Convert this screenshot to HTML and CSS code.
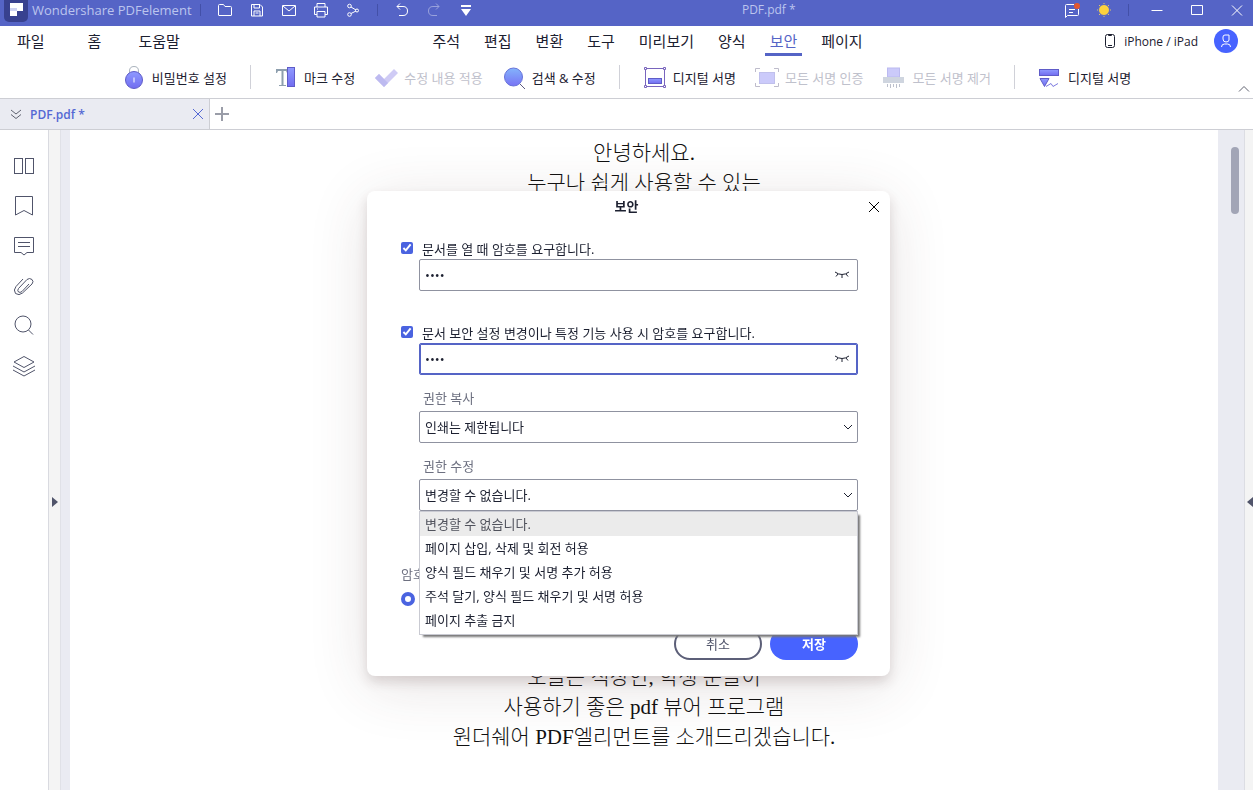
FILE: index.html
```html
<!DOCTYPE html>
<html lang="ko">
  <head>
    <meta charset="UTF-8" />
    <meta name="viewport" content="width=device-width, initial-scale=1.0" />
    <title>PDF.pdf * - Wondershare PDFelement</title>
    <link rel="stylesheet" href="styles.css">
  </head>
  <body>
    <!-- Title bar -->
    <header class="titlebar">
      <div class="titlebar-left">
        <div class="brand">
          <svg class="logo" viewBox="0 0 24 24"><rect y="-3" width="24" height="27" rx="5" fill="#38418f"/><path fill="#fff" d="M6 5h13v8h-6v5H6z"/><path fill="#cfd3f2" d="M6 10h7v3H6z"/></svg>
          <span>Wondershare PDFelement</span>
        </div>
        <span class="bar-sep"></span>
        <button class="icon-button" aria-label="열기"><svg viewBox="0 0 16 16"><path d="M1.5 13V3.500q0-1 1-1h4l1.500 2h5.500q1 0 1 1V13q0 .5-.5.5H2q-.5 0-.5-.5z"/></svg></button>
        <button class="icon-button" aria-label="저장"><svg viewBox="0 0 16 16"><path d="M2.500 2.500h8.500l2.500 2.500v9h-11zM5 2.500v3.500h5.500V3M5 14V9h6v5M6.500 11h3"/></svg></button>
        <button class="icon-button" aria-label="메일"><svg viewBox="0 0 16 16"><path d="M1.500 3.500h13v10h-13zM2 4l6 5 6-5"/></svg></button>
        <button class="icon-button" aria-label="인쇄"><svg viewBox="0 0 16 16"><path d="M4 5V1.500h8V5M4 12.500H1.500V5h13v7.500H12M4 9.500h8v5.500H4zM4 7h1"/></svg></button>
        <button class="icon-button" aria-label="공유"><svg viewBox="0 0 16 16"><circle cx="4.500" cy="4" r="1.800"/><circle cx="4.500" cy="12.500" r="1.800"/><circle cx="12" cy="8.500" r="1.500"/><path d="M6 5l5 3M6 11.500l5-2.500"/></svg></button>
        <span class="bar-sep"></span>
        <button class="icon-button" aria-label="실행 취소"><svg viewBox="0 0 16 16"><path d="M6 1.500L3 4.500l3 3M3 4.500h6q4.500 0 4.500 4.500T9 13.500H5"/></svg></button>
        <button class="icon-button faded" aria-label="다시 실행"><svg viewBox="0 0 16 16"><path d="M10 1.500l3 3-3 3M13 4.500H7Q2.500 4.500 2.500 9T7 13.500h4"/></svg></button>
        <button class="icon-button" aria-label="더 보기"><svg viewBox="0 0 16 16"><path class="solid" d="M3 3h10v2H3zM3 7h10l-5 7z"/></svg></button>
      </div>
      <div class="window-title">PDF.pdf *</div>
      <div class="titlebar-right">
        <button class="icon-button" aria-label="알림"><svg viewBox="0 0 16 16"><path d="M10 2.500H2.500q-1 0-1 1v12l2-2h10q1 0 1-1V7M5 7.500h6M5 10.500h4"/><circle class="dot" cx="13" cy="4" r="3"/></svg></button>
        <button class="icon-button" aria-label="테마"><svg viewBox="0 0 16 16"><g class="rays"><path d="M8 1v14M1 8h14M3 3l10 10M13 3L3 13"/></g><circle class="sun" cx="8" cy="8" r="5.500"/></svg></button>
        <span class="bar-sep"></span>
        <div class="window-buttons">
          <button class="icon-button" aria-label="최소화"><svg viewBox="0 0 16 16"><path d="M2.500 8.500h11"/></svg></button>
          <button class="icon-button" aria-label="최대화"><svg viewBox="0 0 16 16"><path d="M2.500 3.500h11v9h-11z"/></svg></button>
          <button class="icon-button" aria-label="닫기"><svg viewBox="0 0 16 16"><path d="M3 3.500l10 10M13 3.500l-10 10"/></svg></button>
        </div>
      </div>
    </header>

    <!-- Menu -->
    <div class="menubar">
      <nav class="menu menu-left">
        <a href="#">파일</a>
        <a href="#">홈</a>
        <a href="#">도움말</a>
      </nav>
      <nav class="menu menu-tabs">
        <a href="#">주석</a>
        <a href="#">편집</a>
        <a href="#">변환</a>
        <a href="#">도구</a>
        <a href="#">미리보기</a>
        <a href="#">양식</a>
        <a href="#" class="active">보안</a>
        <a href="#">페이지</a>
      </nav>
      <div class="account">
        <a href="#" class="mobile-link">
          <svg viewBox="0 0 12 16"><rect x="1.500" y="1.500" width="9" height="13" rx="2"/><path d="M4.500 1.500v1h3v-1M4 12.500h4"/></svg>
          iPhone / iPad
        </a>
        <button class="avatar" aria-label="계정"><svg viewBox="0 0 24 24"><path d="M9 10V8q0-2 2-2h4v5q0 2-3 2t-3-3zM7.500 18q0-3 3-3h3q3 0 3 3"/></svg></button>
      </div>
    </div>

    <!-- Security tools -->
    <div class="toolbar">
      <div class="tools">
        <button class="tool"><svg viewBox="0 0 24 24"><path d="M7.500 8V6Q7.500 1.500 12 1.500T16.500 6v2" fill="none" stroke="#aab3bd"/><circle cx="12" cy="15" r="8.500" fill="url(#violet)" stroke="#5f5cc8"/><path d="M12 12.500v5" stroke="#fff"/></svg>비밀번호 설정</button>
        <span class="tool-sep"></span>
        <button class="tool"><svg viewBox="0 0 24 24"><path d="M2 4h12v4h-1l-1-2H9.500v14H12v1H5v-1h2.500V6H4L3 8H2z" fill="#8e9fae"/><rect x="13.500" y="2.500" width="7" height="19" fill="url(#violet)" stroke="#5f5cc8"/></svg>마크 수정</button>
        <button class="tool" disabled><svg viewBox="0 0 24 24"><path d="M1 13l4-4 5 5 10-10 4 4-14 14z" fill="#cfcbf5"/><path d="M1 13l4-4 9 9-4 4z" fill="#bdbaf0"/></svg>수정 내용 적용</button>
        <button class="tool"><svg viewBox="0 0 24 24"><path d="M18 19l5 5" stroke="#5b5a80"/><circle cx="11.500" cy="12" r="9" fill="url(#lens)" stroke="#6773d9"/></svg>검색 &amp; 수정</button>
        <span class="tool-sep"></span>
        <button class="tool"><svg viewBox="0 0 24 24"><path d="M2.500 3.500h19v18h-19z" fill="none" stroke="#7965bd"/><path d="M1.500 2.500h2v2h-2zM20.500 2.500h2v2h-2zM1.500 20.500h2v2h-2zM20.500 20.500h2v2h-2z" fill="#fff" stroke="#7965bd"/><rect x="5.500" y="13.500" width="13" height="5" fill="url(#violet)" stroke="#5f5cc8"/></svg>디지털 서명</button>
        <button class="tool" disabled><svg viewBox="0 0 24 24"><path d="M.5 7V3.500H5M19 3.500h4.500V7M.5 18v3.500H5M19 21.500h4.500V18" fill="none" stroke="#bebccb"/><rect x="4.500" y="7.500" width="15" height="11" fill="#cbcafa" stroke="#c0c0ec"/></svg>모든 서명 인증</button>
        <button class="tool" disabled><svg viewBox="0 0 24 24"><rect x="5.500" y="3" width="12" height="9" fill="#cbcafa" stroke="#bbbaf0"/><path d="M1 12h21v6H1z" fill="#cfd5df"/><path d="M5.500 19v3M8.500 19v4M11.500 19v3M14.500 19v4M17.500 19v3" stroke="#bcc0cc"/></svg>모든 서명 제거</button>
        <span class="tool-sep"></span>
        <button class="tool"><svg viewBox="0 0 24 24"><rect x="1.500" y="4.500" width="19" height="6" fill="url(#violet)" stroke="#5f5cc8"/><path d="M2 13.500h9l-4.500 8z" fill="url(#violet)" stroke="#5f5cc8"/><path d="M8 21.500l5-3 2 3 5-3" fill="none" stroke="#7e7be0"/></svg>디지털 서명</button>
      </div>
      <button class="collapse" aria-label="도구 모음 접기"><svg viewBox="0 0 12 8"><path d="M1 6.500l5-5 5 5"/></svg></button>
    </div>

    <!-- Document tabs -->
    <div class="tabs">
      <div class="tab">
        <svg viewBox="0 0 12 12"><path d="M1 2l5 4 5-4M1 6.500l5 4 5-4"/></svg>
        <span class="tab-name">PDF.pdf *</span>
        <button class="tab-close" aria-label="탭 닫기"><svg viewBox="0 0 12 12"><path d="M1 1l10 10M11 1L1 11"/></svg></button>
      </div>
      <button class="tab-add" aria-label="새 탭"><svg viewBox="0 0 14 14"><path d="M7 0v14M0 7h14"/></svg></button>
    </div>

    <main class="workspace">
      <aside class="sidebar">
        <button aria-label="축소판"><svg viewBox="0 0 24 24"><rect x="2.500" y="4.500" width="8" height="15"/><rect x="13.500" y="4.500" width="8" height="15"/></svg></button>
        <button aria-label="책갈피"><svg viewBox="0 0 24 24"><path d="M3.500 2.500h17v18.500L12 16.500 3.500 21z"/></svg></button>
        <button aria-label="주석 목록"><svg viewBox="0 0 24 24"><path d="M2.500 3.500h19v15H15l-3 2.500-3-2.500H2.500zM6 8.500h12M6 12.500h12"/></svg></button>
        <button aria-label="첨부 파일"><svg viewBox="0 0 24 24"><path d="M11 5L4 12.500q-3 3.500-.5 7 3.500 2.500 7-.5l9.500-9q2-2.500 0-4.500-2.500-2-5 0l-8.500 9q-1.500 2 0 3.500 1.500 1 3.500-.5L17 10"/></svg></button>
        <button aria-label="검색"><svg viewBox="0 0 24 24"><circle cx="11" cy="10" r="8"/><path d="M16.500 16l4.500 4.500"/></svg></button>
        <button aria-label="레이어"><svg viewBox="0 0 24 24"><path d="M12 2.500l10 5.500-10 5.500L2 8zM1 12l11 6 11-6M1 16l11 6 11-6"/></svg></button>
      </aside>
      <div class="splitter"><svg viewBox="0 0 6 10"><path d="M0 0l6 5-6 5z"/></svg></div>
      <div class="viewer">
        <article class="page">
          <p>안녕하세요.<br>누구나 쉽게 사용할 수 있는</p>
          <p>오늘은 직장인, 학생 분들이<br>사용하기 좋은 pdf 뷰어 프로그램<br>원더쉐어 PDF엘리먼트를 소개드리겠습니다.</p>
        </article>
        <div class="scrollbar"><div class="thumb"></div></div>
      </div>
      <div class="splitter splitter-right"><svg viewBox="0 0 6 10"><path d="M6 0L0 5l6 5z"/></svg></div>
    </main>

    <!-- Security dialog -->
    <div class="overlay">
      <form class="dialog" role="dialog" aria-labelledby="dialog-title">
        <div class="dialog-header">
          <h2 id="dialog-title">보안</h2>
          <button type="button" aria-label="대화 상자 닫기"><svg viewBox="0 0 12 12"><path d="M1 1l10 10M11 1L1 11"/></svg></button>
        </div>

        <div class="password-group">
          <label class="check"><input type="checkbox" checked>문서를 열 때 암호를 요구합니다.</label>
          <div class="field">
            <input type="password" value="1234" aria-label="문서 열기 암호">
            <button type="button" aria-label="암호 표시"><svg viewBox="0 0 14 8"><path d="M0 1q7 5 14 0M3 3L1 5.500M7 4v3M11 3l2 2.500"/></svg></button>
          </div>
        </div>

        <div class="password-group">
          <label class="check"><input type="checkbox" checked>문서 보안 설정 변경이나 특정 기능 사용 시 암호를 요구합니다.</label>
          <div class="field focused">
            <input type="password" value="1234" aria-label="권한 암호">
            <button type="button" aria-label="암호 표시"><svg viewBox="0 0 14 8"><path d="M0 1q7 5 14 0M3 3L1 5.500M7 4v3M11 3l2 2.500"/></svg></button>
          </div>
        </div>

        <div class="select-group">
          <label for="copy">권한 복사</label>
          <div class="field">
            <select id="copy"><option>인쇄는 제한됩니다</option></select>
            <svg class="arrow" viewBox="0 0 8 6"><path d="M0 1l4 4 4-4"/></svg>
          </div>
        </div>

        <div class="select-group">
          <label for="modify">권한 수정</label>
          <div class="field">
            <select id="modify"><option>변경할 수 없습니다.</option></select>
            <svg class="arrow" viewBox="0 0 8 6"><path d="M0 1l4 4 4-4"/></svg>
            <ul class="options" role="listbox">
              <li role="option" aria-selected="true" class="selected">변경할 수 없습니다.</li>
              <li role="option">페이지 삽입, 삭제 및 회전 허용</li>
              <li role="option">양식 필드 채우기 및 서명 추가 허용</li>
              <li role="option">주석 달기, 양식 필드 채우기 및 서명 허용</li>
              <li role="option">페이지 추출 금지</li>
            </ul>
          </div>
        </div>

        <div class="encryption">
          <label for="level">암호</label>
          <input type="radio" id="level" name="level" checked>
        </div>

        <div class="dialog-actions">
          <button type="button" class="cancel">취소</button>
          <button type="button" class="save">저장</button>
        </div>
      </form>
    </div>

    <!-- Shared gradients -->
    <svg class="defs" aria-hidden="true">
      <linearGradient id="violet" x1="0" y1="0" x2="0" y2="1"><stop offset="0" stop-color="#8f9aff"/><stop offset="1" stop-color="#716cf0"/></linearGradient>
      <linearGradient id="lens" x1="0" y1="0" x2="0" y2="1"><stop offset="0" stop-color="#83b4fb"/><stop offset="1" stop-color="#7873f5"/></linearGradient>
    </svg>
  </body>
</html>
```

FILE: styles.css
```css
* {
  box-sizing: border-box;
}

body {
  font-family: "Open Sans", "Noto Sans CJK KR", sans-serif;
  font-size: 13px;
  margin: 0;
  height: 100vh;
  display: flex;
  flex-direction: column;
  overflow: hidden;
  color: #1c2030;
  background: #fff;
}

button {
  font: inherit;
  color: inherit;
  background: none;
  border: none;
  padding: 0;
  cursor: pointer;
}

a {
  color: inherit;
  text-decoration: none;
}

svg {
  display: block;
  fill: none;
  stroke: currentColor;
}

.defs {
  position: absolute;
  width: 0;
  height: 0;
}

/* Title bar */
.titlebar {
  display: flex;
  justify-content: space-between;
  height: 26px;
  padding: 0 8px 0 4px;
  background: #5564c6;
  color: #fff;
}

.titlebar-left,
.titlebar-right {
  display: flex;
  align-items: center;
  gap: 16px;
  height: 20px;
}

.brand {
  display: flex;
  align-items: center;
  gap: 4px;
  color: #bcc4ee;
}

.logo {
  width: 24px;
  height: 24px;
  stroke: none;
}

.bar-sep {
  width: 1px;
  height: 12px;
  background: #4350a8;
}

.brand + .bar-sep {
  margin-left: -8px;
}

.icon-button svg {
  width: 16px;
  height: 16px;
}

.icon-button.faded {
  opacity: 0.4;
}

.icon-button .solid {
  fill: #fff;
  stroke: none;
}

.icon-button .dot {
  fill: #e4572e;
  stroke: none;
}

.icon-button .rays {
  stroke: #e0c36a;
}

.icon-button .sun {
  fill: #fdd23e;
  stroke: #5564c6;
}

.window-title {
  line-height: 20px;
  color: #bcc4ee;
  font-size: 12px;
}

.window-buttons {
  display: flex;
  gap: 24px;
  margin-left: 4px;
}

/* Menu */
.menubar {
  display: flex;
  align-items: center;
  height: 30px;
  padding: 0 15px 0 17px;
}

.menu {
  display: flex;
  font-size: 15px;
  line-height: 30px;
}

.menu-left {
  flex: 1;
  gap: 43px;
}

.menu-left a:last-child {
  margin-left: -6px;
}

.menu-tabs {
  gap: 14px;
  margin-left: 40px;
}

.menu-tabs a {
  padding: 0 5px;
}

.menu-tabs .active {
  color: #5564c6;
  box-shadow: inset 0 -3px #5564c6;
}

.account {
  flex: 1;
  display: flex;
  justify-content: flex-end;
  align-items: center;
  gap: 16px;
  font-size: 12px;
}

.mobile-link {
  display: flex;
  align-items: center;
  gap: 8px;
}

.mobile-link svg {
  width: 12px;
  height: 16px;
}

.avatar svg {
  width: 24px;
  height: 24px;
  border-radius: 50%;
  background: #4763ff;
  color: #fff;
}

/* Toolbar */
.toolbar {
  display: grid;
  grid-template-columns: 1fr auto 1fr;
  height: 43px;
  border-bottom: 1px solid #cdced4;
}

.tools {
  grid-column: 2;
  display: flex;
  align-items: center;
  gap: 19px;
}

.tool {
  display: flex;
  align-items: center;
  gap: 6px;
  white-space: nowrap;
}

.tool:disabled {
  color: #bfc1cc;
  cursor: default;
}

.tool svg {
  width: 24px;
  height: 24px;
  stroke: none;
}

.tool-sep {
  width: 1px;
  height: 24px;
  margin: 0 4px;
  background: #d0d1d8;
}

.collapse {
  justify-self: end;
  align-self: end;
  padding: 5px 3px;
}

.collapse svg {
  width: 12px;
  height: 8px;
  color: #5f6270;
}

/* Document tabs */
.tabs {
  display: flex;
  height: 31px;
  border-bottom: 1px solid #cdced4;
}

.tab {
  display: flex;
  align-items: center;
  width: 210px;
  padding: 0 5px 0 10px;
  gap: 8px;
  background: #eaebf2;
  border-right: 1px solid #cdced4;
  color: #5468d4;
}

.tab svg {
  width: 12px;
  height: 12px;
}

.tab > svg {
  color: #5f6270;
}

.tab-name {
  flex: 1;
  font-size: 12px;
  font-weight: 600;
}

.tab-add {
  padding: 0 5px;
}

.tab-add svg {
  width: 14px;
  height: 14px;
  color: #9a9da8;
  stroke-width: 2;
}

/* Workspace */
.workspace {
  flex: 1;
  display: flex;
  min-height: 0;
}

.sidebar {
  display: flex;
  flex-direction: column;
  align-items: center;
  gap: 16px;
  width: 49px;
  padding-top: 24px;
  border-right: 1px solid #d9dae0;
  color: #50546a;
}

.sidebar svg {
  width: 24px;
  height: 24px;
}

.splitter {
  display: flex;
  align-items: center;
  justify-content: center;
  width: 12px;
  padding-top: 84px;
  background: #f4f4f4;
  border-right: 1px solid #e0e1e7;
}

.splitter svg {
  width: 6px;
  height: 10px;
  fill: #50546a;
  stroke: none;
}

.splitter-right {
  width: 9px;
  justify-content: flex-end;
  border-right: none;
  border-left: 1px solid #dcdde3;
}

.viewer {
  flex: 1;
  display: flex;
  padding-left: 9px;
  background: #eaebf2;
}

.page {
  flex: 1;
  padding-top: 8px;
  background: #fff;
  color: #111;
  font-family: "Liberation Serif", "Noto Sans CJK KR", serif;
  font-size: 21px;
  font-weight: 300;
  line-height: 30px;
  text-align: center;
}

.page p {
  margin: 0 0 464px;
}

.page p:last-child {
  margin-bottom: 0;
}

.scrollbar {
  width: 26px;
  padding: 17px 5px 0 13px;
}

.thumb {
  height: 67px;
  border-radius: 4px;
  background: #a2a5b6;
}

/* Dialog */
.overlay {
  position: fixed;
  inset: 0;
  display: flex;
  align-items: center;
  justify-content: center;
  padding: 77px 0 0 4px;
}

.dialog {
  width: 523px;
  padding: 0 32px 16px 34px;
  border-radius: 8px;
  background: #fff;
  box-shadow: 0 6px 12px rgba(70, 40, 40, 0.16), 0 10px 60px rgba(80, 50, 50, 0.14);
}

.dialog-header {
  display: flex;
  align-items: center;
  height: 32px;
  margin-right: -22px;
  margin-bottom: 14px;
}

.dialog-header h2 {
  flex: 1;
  margin: 0;
  padding: 0 16px 4px 0;
  font-size: 13px;
  font-weight: 600;
  text-align: center;
}

.dialog-header svg {
  width: 12px;
  height: 12px;
  color: #000;
}

.check {
  display: flex;
  align-items: center;
  gap: 9px;
  height: 22px;
}

.check input {
  width: 12px;
  height: 12px;
  margin: 0;
  accent-color: #4a63e0;
}

.password-group {
  margin-bottom: 30px;
}

.field {
  position: relative;
  display: flex;
  align-items: center;
  height: 32px;
  margin-left: 18px;
  border: 1px solid #8f92a0;
  border-radius: 2px;
}

.field.focused {
  border-color: #5564c6;
  box-shadow: inset 0 0 0 1px #5564c6;
}

.field input,
.field select {
  flex: 1;
  height: 28px;
  padding: 0 5px;
  border: none;
  outline: none;
  background: none;
  font: inherit;
  color: inherit;
  appearance: none;
}

.field button {
  padding: 0 8px;
}

.field button svg {
  width: 14px;
  height: 8px;
}

.arrow {
  width: 8px;
  height: 6px;
  margin-right: 5px;
}

.password-group + .select-group {
  margin-top: -20px;
}

.select-group {
  margin-bottom: 10px;
}

.select-group label {
  display: block;
  height: 26px;
  padding-left: 22px;
  line-height: 26px;
  color: #6d7080;
}

.options {
  position: absolute;
  top: 31px;
  left: -1px;
  right: -1px;
  z-index: 1;
  margin: 0;
  padding: 0 0 2px;
  list-style: none;
  background: #fff;
  border: 1px solid #c9cad2;
  box-shadow: 3px 3px 2px -1px #777;
}

.options li {
  padding: 0 5px;
  line-height: 24px;
}

.options .selected {
  background: #ebebeb;
  color: #50525c;
}

.encryption {
  margin: 53px 0 22px;
  color: #6d7080;
}

.encryption label {
  display: block;
  line-height: 20px;
}

.encryption input {
  display: block;
  width: 14px;
  height: 14px;
  margin: 8px 0 0;
  appearance: none;
  border: 4px solid #4a63e0;
  border-radius: 50%;
  background: #fff;
}

.dialog-actions {
  display: flex;
  justify-content: flex-end;
  gap: 8px;
}

.dialog-actions button {
  width: 88px;
  height: 32px;
  padding-bottom: 2px;
  border-radius: 16px;
}

.cancel {
  border: 2px solid #5c5f78;
  color: #50546a;
}

.dialog-actions .save {
  background: #4763ff;
  color: #fff;
  font-weight: 600;
}
```
